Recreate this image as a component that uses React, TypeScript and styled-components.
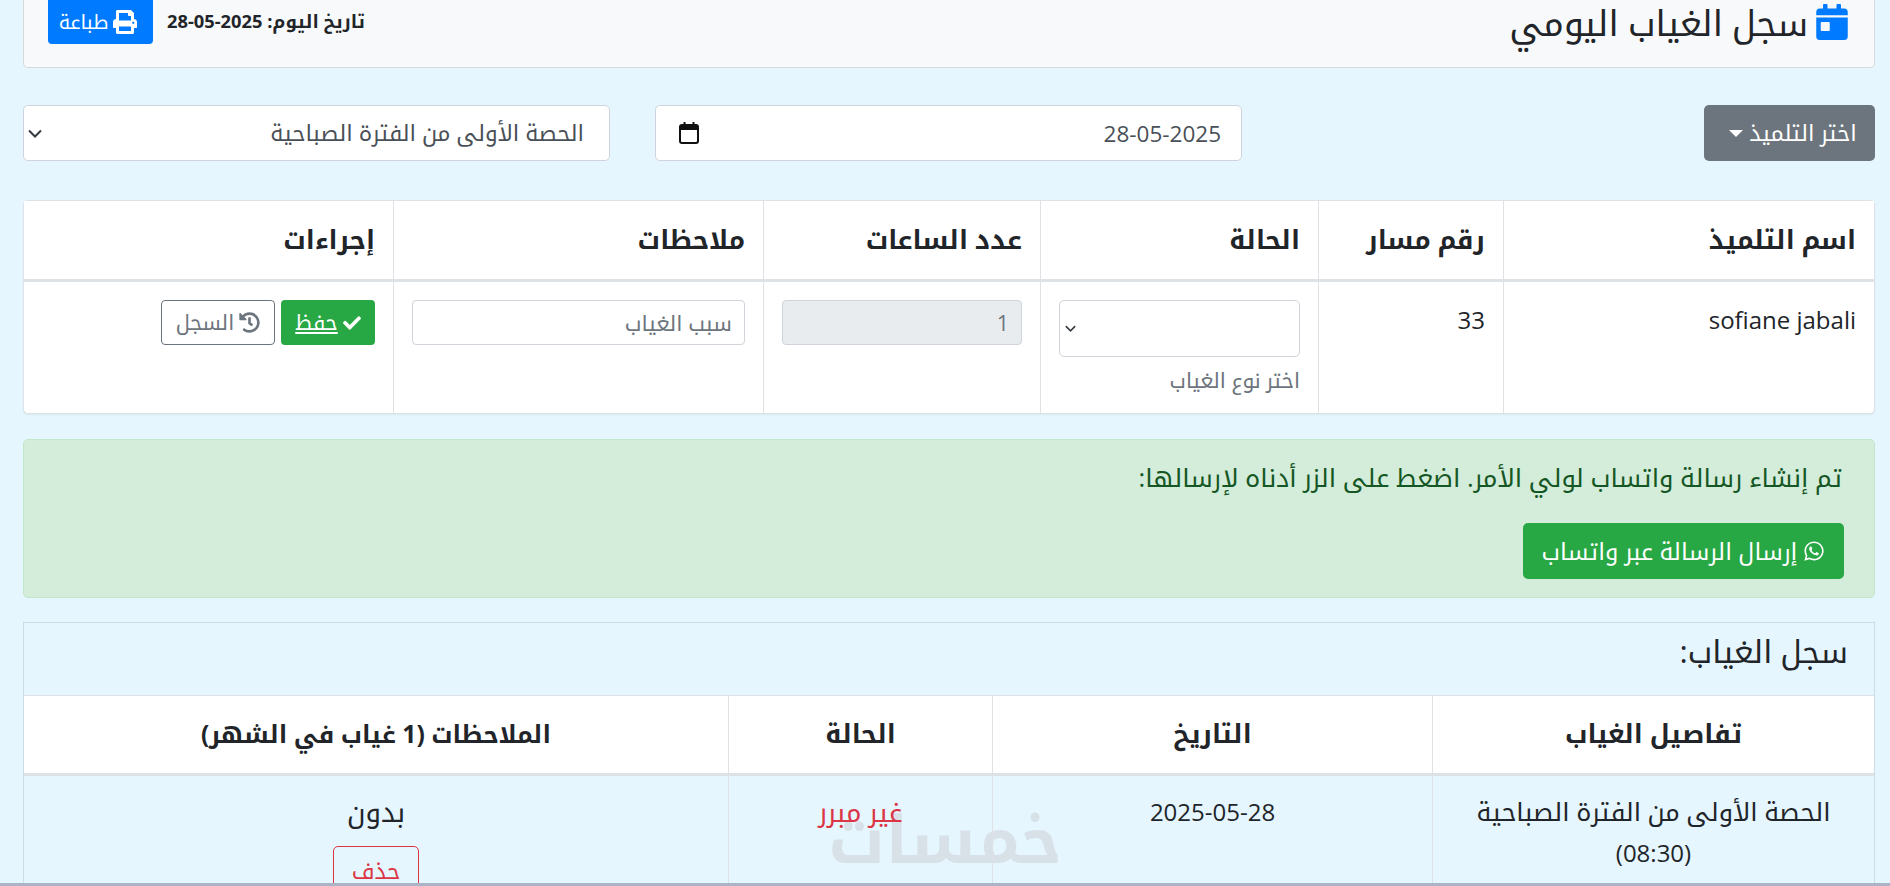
import React from "react";
import styled, { createGlobalStyle } from "styled-components";
import { FaCalendarDay, FaPrint, FaCheck, FaHistory, FaWhatsapp } from "react-icons/fa";

const Global = createGlobalStyle`
  html, body { margin: 0; padding: 0; height: 886px; overflow: hidden; background: #e5f6ff; }
  body { font-family: "Open Sans", "Noto Kufi Arabic", "DejaVu Sans", sans-serif; color: #212529; }
  * { box-sizing: border-box; }
`;

const Page = styled.div`
  direction: rtl;
  position: relative;
  width: 1890px;
  height: 886px;
  overflow: hidden;
  padding: 0 15px;
`;

const Inner = styled.div`
  position: relative;
  z-index: 1;
  margin-top: -30px;
  margin-left: 8px;
  display: flex;
  flex-direction: column;
`;

const HeaderCard = styled.header`
  height: 98px;
  background: #f8f9fa;
  border: 1px solid rgba(0, 0, 0, 0.125);
  border-radius: 5px;
  padding: 6px 24px 0;
  display: flex;
  align-items: center;
  justify-content: space-between;
`;

const Title = styled.h3`
  margin: 0;
  font-size: 35.4px;
  font-weight: 400;
  line-height: 40px;
  display: flex;
  align-items: center;
  gap: 6px;
  svg { color: #007bff; font-size: 36px; }
`;

const HeaderLeft = styled.div`
  display: flex;
  align-items: center;
  gap: 14px;
`;

const DateLabel = styled.span`
  font-size: 18.3px;
  font-weight: 700;
`;

const PrintButton = styled.button`
  width: 105px;
  height: 56px;
  margin-top: -12px;
  padding: 12px 5px 0 0;
  background: #007bff;
  color: #fff;
  border: 0;
  border-radius: 4px;
  font: inherit;
  font-size: 19.5px;
  display: flex;
  align-items: center;
  justify-content: center;
  gap: 5px;
`;

const Filters = styled.section`
  display: flex;
  justify-content: space-between;
  align-items: center;
  margin-top: 37px;
  height: 56px;
`;

const DropButton = styled.button`
  width: 171px;
  height: 56px;
  padding: 0 0 0 7px;
  background: #6c757d;
  color: #fff;
  border: 0;
  border-radius: 5px;
  font: inherit;
  font-size: 22.5px;
  display: flex;
  align-items: center;
  justify-content: center;
  gap: 6px;
  &::after {
    content: "";
    border-top: 7px solid #fff;
    border-left: 7px solid transparent;
    border-right: 7px solid transparent;
  }
`;

const FilterField = styled.div`
  width: 587px;
  height: 56px;
  background: #fff;
  border: 1px solid #ced4da;
  border-radius: 5px;
  padding: 0 25px 0 4px;
  display: flex;
  align-items: center;
  justify-content: space-between;
  font-size: 22.5px;
  color: #495057;
`;

const DateField = styled(FilterField)`
  padding-left: 23px;
  padding-right: 20px;
`;

const FilterGroup = styled.div`
  display: flex;
  gap: 45px;
`;

const StudentTable = styled.table`
  margin-top: 39px;
  width: 100%;
  table-layout: fixed;
  border-collapse: separate;
  border-spacing: 0;
  background: #fff;
  border: 1px solid #dee2e6;
  border-radius: 5px;
  box-shadow: 0 1px 2px rgba(0, 0, 0, 0.06);
`;

const Th = styled.th<{ $w?: number; $center?: boolean }>`
  width: ${(p) => (p.$w ? p.$w + "px" : "auto")};
  height: 81px;
  padding: 0 18px;
  background: #fff;
  font-size: 26px;
  font-weight: 700;
  text-align: ${(p) => (p.$center ? "center" : "right")};
  border-bottom: 3px solid #dee2e6;
  border-left: 1px solid #dee2e6;
  &:last-child { border-left: 0; }
`;

const Td = styled.td<{ $center?: boolean }>`
  padding: 17px 18px 18px;
  height: 131px;
  vertical-align: top;
  font-size: 24px;
  line-height: 41px;
  text-align: ${(p) => (p.$center ? "center" : "right")};
  border-left: 1px solid #dee2e6;
  &:last-child { border-left: 0; }
`;

const Select = styled.div`
  margin-top: 1px;
  height: 57px;
  border: 1px solid #ced4da;
  border-radius: 5px;
  background: #fff;
  display: flex;
  align-items: center;
  justify-content: flex-end;
  padding-left: 5px;
  svg { width: 11px; height: 7px; }
`;

const Hint = styled.small`
  display: block;
  margin-top: 9px;
  font-size: 21px;
  line-height: 28px;
  color: #6c757d;
`;

const TextInput = styled.div<{ $disabled?: boolean }>`
  margin-top: 1px;
  height: 45px;
  border: 1px solid #ced4da;
  border-radius: 4px;
  background: ${(p) => (p.$disabled ? "#e9ecef" : "#fff")};
  color: #6c757d;
  font-size: 21.5px;
  display: flex;
  align-items: center;
  padding: 0 12px;
`;

const Actions = styled.div`
  margin-top: 1px;
  display: flex;
  gap: 6px;
`;

const SmallButton = styled.button<{ $w: number; $outline?: boolean }>`
  width: ${(p) => p.$w}px;
  height: 45px;
  border-radius: 4px;
  font: inherit;
  font-size: 21px;
  line-height: 1.4;
  padding: 0;
  display: flex;
  align-items: center;
  justify-content: center;
  gap: 5px;
  background: ${(p) => (p.$outline ? "transparent" : "#28a745")};
  color: ${(p) => (p.$outline ? "#6c757d" : "#fff")};
  border: ${(p) => (p.$outline ? "1px solid #6c757d" : "0")};
  text-decoration: ${(p) => (p.$outline ? "none" : "underline")};
`;

const Alert = styled.section`
  margin-top: 25px;
  height: 159px;
  background: #d4edda;
  border: 1px solid #c3e6cb;
  border-radius: 5px;
  padding: 22px 30px 0;
  color: #155724;
  font-size: 25.6px;
  line-height: 32px;
`;

const AlertText = styled.p`
  margin: 0 2px 0 0;
`;

const WhatsButton = styled.button`
  margin-top: 29px;
  width: 321px;
  height: 56px;
  background: #28a745;
  color: #fff;
  border: 0;
  border-radius: 5px;
  font: inherit;
  font-size: 23.7px;
  display: flex;
  align-items: center;
  justify-content: center;
  gap: 6px;
`;

const LogCard = styled.section`
  margin-top: 24px;
  border: 1px solid rgba(0, 0, 0, 0.1);
  border-bottom: 0;
`;

const LogTitle = styled.h5`
  margin: 0;
  height: 72px;
  padding: 0 26px 14px 0;
  font-size: 31.5px;
  font-weight: 400;
  display: flex;
  align-items: center;
`;

const LogTable = styled.table`
  width: 100%;
  table-layout: fixed;
  border-collapse: separate;
  border-spacing: 0;
  border-top: 1px solid #dee2e6;
`;

const LogHeadCell = styled(Th)`
  height: 80px;
`;

const NotesHeadCell = styled(LogHeadCell)`
  font-size: 24.6px;
`;

const LogCell = styled(Td)`
  height: auto;
  padding-top: 15px;
  font-size: 24px;
  line-height: 41px;
`;

const ArabicText = styled.span`
  font-size: 27.5px;
`;

const PeriodText = styled.span`
  font-size: 25.4px;
`;

const DangerText = styled(ArabicText)`
  font-size: 27px;
  color: #dc3545;
`;

const DeleteButton = styled.button`
  display: block;
  margin: 13px auto 0;
  width: 86px;
  height: 56px;
  padding: 0 0 8px;
  background: transparent;
  color: #dc3545;
  border: 1px solid #dc3545;
  border-radius: 5px;
  font: inherit;
  font-size: 22.5px;
`;

const Watermark = styled.div`
  position: absolute;
  left: 834px;
  top: 803px;
  width: 228px;
  text-align: center;
  font-family: "Noto Kufi Arabic", "DejaVu Sans", sans-serif;
  font-size: 66px;
  line-height: 76px;
  font-weight: 700;
  color: #d9e1e8;
  pointer-events: none;
  white-space: nowrap;
`;

const BottomRule = styled.div`
  position: absolute;
  z-index: 2;
  left: 0;
  right: 0;
  bottom: 0;
  height: 3px;
  background: #aab4c5;
`;

const Chevron = () => (
  <svg width="14" height="9" viewBox="0 0 14 9" fill="none" stroke="#343a40" strokeWidth="2">
    <path d="M1 1.5l6 6 6-6" />
  </svg>
);

const CalendarGlyph = () => (
  <svg width="20" height="22" viewBox="0 0 20 22" fill="none">
    <rect x="1" y="3" width="18" height="18" rx="2" stroke="#111" strokeWidth="2" />
    <path d="M5.5 0v5M14.5 0v5" stroke="#111" strokeWidth="2" />
    <rect x="2" y="3" width="16" height="5" fill="#111" />
  </svg>
);

export default function App() {
  return (
    <Page>
      <Global />
      <Watermark>خمسات</Watermark>
      <Inner>
        <HeaderCard>
          <Title>
            <FaCalendarDay />
            <span>سجل الغياب اليومي</span>
          </Title>
          <HeaderLeft>
            <DateLabel>تاريخ اليوم: 2025-05-28</DateLabel>
            <PrintButton>
              <FaPrint size={24} />
              <span>طباعة</span>
            </PrintButton>
          </HeaderLeft>
        </HeaderCard>

        <Filters>
          <DropButton>اختر التلميذ</DropButton>
          <FilterGroup>
            <DateField>
              <span>28-05-2025</span>
              <CalendarGlyph />
            </DateField>
            <FilterField>
              <span>الحصة الأولى من الفترة الصباحية</span>
              <Chevron />
            </FilterField>
          </FilterGroup>
        </Filters>

        <StudentTable>
          <thead>
            <tr>
              <Th $w={371}>اسم التلميذ</Th>
              <Th $w={185}>رقم مسار</Th>
              <Th $w={278}>الحالة</Th>
              <Th $w={277}>عدد الساعات</Th>
              <Th $w={370}>ملاحظات</Th>
              <Th>إجراءات</Th>
            </tr>
          </thead>
          <tbody>
            <tr>
              <Td>sofiane jabali</Td>
              <Td>33</Td>
              <Td>
                <Select><Chevron /></Select>
                <Hint>اختر نوع الغياب</Hint>
              </Td>
              <Td><TextInput $disabled>1</TextInput></Td>
              <Td><TextInput>سبب الغياب</TextInput></Td>
              <Td>
                <Actions>
                  <SmallButton $w={94}><FaCheck size={18} /><span>حفظ</span></SmallButton>
                  <SmallButton $w={114} $outline><FaHistory size={21} /><span>السجل</span></SmallButton>
                </Actions>
              </Td>
            </tr>
          </tbody>
        </StudentTable>

        <Alert>
          <AlertText>تم إنشاء رسالة واتساب لولي الأمر. اضغط على الزر أدناه لإرسالها:</AlertText>
          <WhatsButton><FaWhatsapp size={22} /><span>إرسال الرسالة عبر واتساب</span></WhatsButton>
        </Alert>

        <LogCard>
          <LogTitle>سجل الغياب:</LogTitle>
          <LogTable>
            <thead>
              <tr>
                <LogHeadCell $w={442} $center>تفاصيل الغياب</LogHeadCell>
                <LogHeadCell $w={440} $center>التاريخ</LogHeadCell>
                <LogHeadCell $w={264} $center>الحالة</LogHeadCell>
                <NotesHeadCell $center>الملاحظات (1 غياب في الشهر)</NotesHeadCell>
              </tr>
            </thead>
            <tbody>
              <tr>
                <LogCell $center><PeriodText>الحصة الأولى من الفترة الصباحية</PeriodText> (08:30)</LogCell>
                <LogCell $center>2025-05-28</LogCell>
                <LogCell $center><DangerText>غير مبرر</DangerText></LogCell>
                <LogCell $center>
                  <ArabicText>بدون</ArabicText>
                  <DeleteButton>حذف</DeleteButton>
                </LogCell>
              </tr>
            </tbody>
          </LogTable>
        </LogCard>
      </Inner>
      <BottomRule />
    </Page>
  );
}
